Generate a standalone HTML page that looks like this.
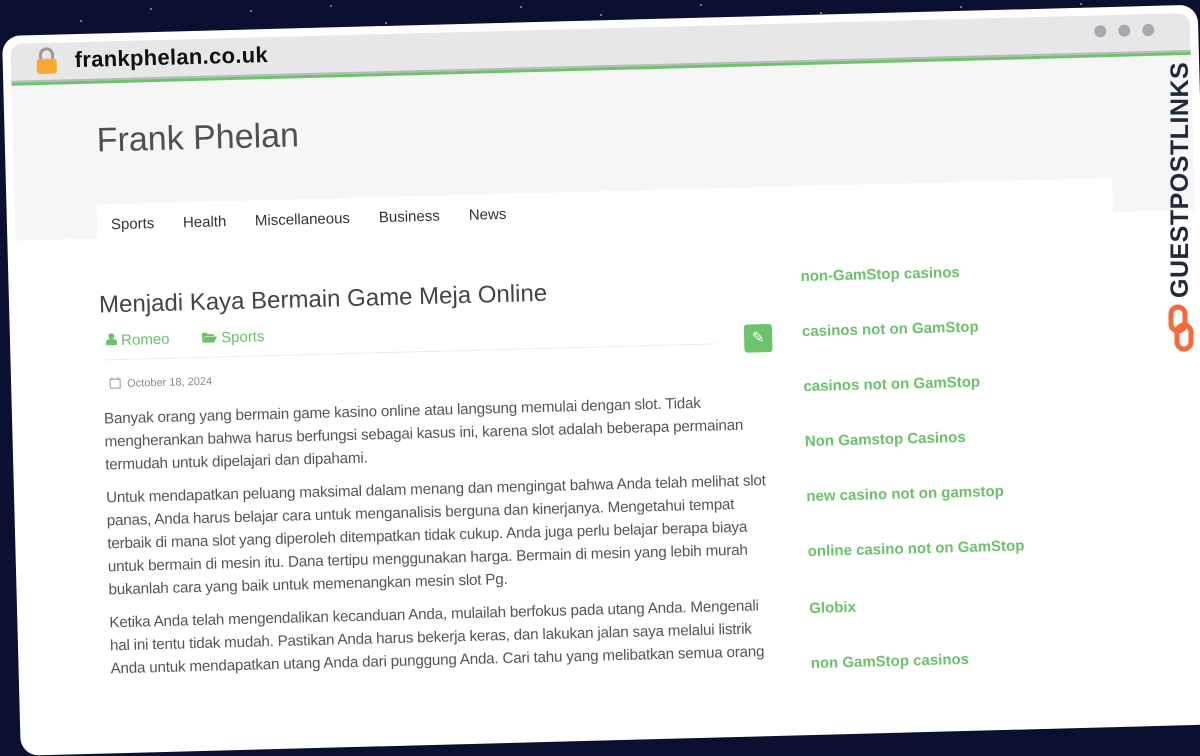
<!DOCTYPE html>
<html><head><meta charset="utf-8">
<style>
*{margin:0;padding:0;box-sizing:border-box}
html,body{width:1200px;height:670px;overflow:hidden;background:#0b1030;font-family:"Liberation Sans",sans-serif}
.star{position:absolute;width:2px;height:2px;background:#cfd6ff;border-radius:50%;opacity:.7}
#win{position:absolute;left:2px;top:36px;width:1196px;height:720px;transform:rotate(-1.5deg);transform-origin:0 0;background:#fff;border-radius:18px;padding:8px}
#inner{position:relative;width:100%;height:100%;background:#fff;border-radius:12px 12px 0 0;overflow:hidden}
#bar{position:absolute;left:0;top:0;right:0;height:38px;background:#e7e7e9}
#bar .g1{position:absolute;left:0;right:0;top:37px;height:2px;background:#b9b9bd}
#bar .g2{position:absolute;left:0;right:0;top:39px;height:3px;background:#6cc36c}
.url{position:absolute;left:64px;top:5px;font-size:22px;font-weight:bold;color:#111;letter-spacing:.3px}
.dot{position:absolute;top:10px;width:12px;height:12px;border-radius:50%;background:#a9a9ad}
#head{position:absolute;left:0;right:0;top:42px;height:155px;background:#f6f6f6}
.site{position:absolute;left:84px;top:38px;font-size:34px;color:#505050}
#nav{position:absolute;left:82px;top:121px;width:1016px;height:42px;background:#fff}
#nav span{position:absolute;top:12px;font-size:15px;color:#333}
.title{position:absolute;left:82px;top:250px;font-size:24px;color:#444}
.meta{position:absolute;top:291px;font-size:15px;color:#6cc06c}
.pin{position:absolute;left:726px;top:300px;width:28px;height:28px;background:#6cc36c;border-radius:3px;color:#fff;text-align:center;line-height:28px;font-size:15px}
.hr{position:absolute;left:86px;top:318px;width:612px;height:1px;background:#ececec}
.date{position:absolute;left:90px;top:336px;font-size:11px;color:#888}
.body{position:absolute;left:84px;top:366px;width:664px;font-size:15.2px;line-height:23px;color:#555;letter-spacing:-.2px}
.body p{margin-bottom:10px}
.side a{position:absolute;left:784px;font-size:15px;font-weight:bold;color:#6cc06c;text-decoration:none}
</style></head><body>
<div class="star" style="left:250px;top:10px"></div><div class="star" style="left:385px;top:22px"></div><div class="star" style="left:520px;top:6px"></div><div class="star" style="left:600px;top:14px"></div><div class="star" style="left:700px;top:4px"></div><div class="star" style="left:820px;top:12px"></div><div class="star" style="left:960px;top:6px"></div><div class="star" style="left:80px;top:20px"></div><div class="star" style="left:150px;top:8px"></div><div class="star" style="left:1080px;top:3px"></div><div class="star" style="left:330px;top:5px"></div>
<div id="win"><div id="inner">
<div id="head">
<div class="site">Frank Phelan</div>
<div id="nav"><span style="left:14px">Sports</span><span style="left:86px">Health</span><span style="left:158px">Miscellaneous</span><span style="left:282px">Business</span><span style="left:372px">News</span></div>
</div>
<div id="bar">
<svg style="position:absolute;left:24px;top:4px" width="24" height="28" viewBox="0 0 24 28"><path d="M6 13V8a6 6 0 0 1 12 0v5" fill="none" stroke="#9a9a9a" stroke-width="3"/><rect x="2" y="12" width="20" height="15" rx="3" fill="#f7a934"/></svg>
<div class="url">frankphelan.co.uk</div>
<div class="dot" style="left:1084px"></div><div class="dot" style="left:1108px"></div><div class="dot" style="left:1132px"></div>
<div class="g1"></div><div class="g2"></div>
</div>
<div class="title">Menjadi Kaya Bermain Game Meja Online</div>
<div class="meta" style="left:88px"><svg width="11" height="12" viewBox="0 0 11 12"><circle cx="5.5" cy="3" r="3" fill="#6cc06c"/><path d="M0 12v-3a3 3 0 0 1 3-3h5a3 3 0 0 1 3 3v3z" fill="#6cc06c"/></svg> Romeo</div>
<div class="meta" style="left:184px"><svg width="15" height="11" viewBox="0 0 15 11"><path d="M0 1h5l1 1.5h6v2H3L0 10z" fill="#6cc06c"/><path d="M3 5h12l-3 6H0z" fill="#6cc06c"/></svg> Sports</div>
<div class="pin">✎</div>
<div class="hr"></div>
<div class="date"><svg width="12" height="12" viewBox="0 0 12 12" style="vertical-align:-2px;margin-right:6px"><rect x="1" y="2" width="10" height="9" fill="none" stroke="#999"/><path d="M3 0v3M9 0v3" stroke="#999"/></svg>October 18, 2024</div>
<div class="body">
<p>Banyak orang yang bermain game kasino online atau langsung memulai dengan slot. Tidak mengherankan bahwa harus berfungsi sebagai kasus ini, karena slot adalah beberapa permainan termudah untuk dipelajari dan dipahami.</p>
<p>Untuk mendapatkan peluang maksimal dalam menang dan mengingat bahwa Anda telah melihat slot panas, Anda harus belajar cara untuk menganalisis berguna dan kinerjanya. Mengetahui tempat terbaik di mana slot yang diperoleh ditempatkan tidak cukup. Anda juga perlu belajar berapa biaya untuk bermain di mesin itu. Dana tertipu menggunakan harga. Bermain di mesin yang lebih murah bukanlah cara yang baik untuk memenangkan mesin slot Pg.</p>
<p>Ketika Anda telah mengendalikan kecanduan Anda, mulailah berfokus pada utang Anda. Mengenali hal ini tentu tidak mudah. Pastikan Anda harus bekerja keras, dan lakukan jalan saya melalui listrik Anda untuk mendapatkan utang Anda dari punggung Anda. Cari tahu yang melibatkan semua orang</p>
</div>
<div class="side">
<a style="top:245px">non-GamStop casinos</a>
<a style="top:300px">casinos not on GamStop</a>
<a style="top:355px">casinos not on GamStop</a>
<a style="top:410px">Non Gamstop Casinos</a>
<a style="top:465px">new casino not on gamstop</a>
<a style="top:520px">online casino not on GamStop</a>
<a style="top:577px">Globix</a>
<a style="top:632px">non GamStop casinos</a>
</div>
</div></div>
<div style="position:absolute;left:1166px;top:298px;width:300px;height:28px;transform:rotate(-90deg);transform-origin:0 0;font-size:25px;font-weight:bold;color:#1f2a3a;letter-spacing:.5px;line-height:28px">GUESTPOSTLINKS</div>
<svg style="position:absolute;left:1168px;top:304px" width="26" height="48" viewBox="0 0 26 48"><rect x="3" y="3" width="14" height="24" rx="7" fill="none" stroke="#f26b3a" stroke-width="5"/><rect x="9" y="21" width="14" height="24" rx="7" fill="none" stroke="#f26b3a" stroke-width="5"/></svg>
</body></html>
